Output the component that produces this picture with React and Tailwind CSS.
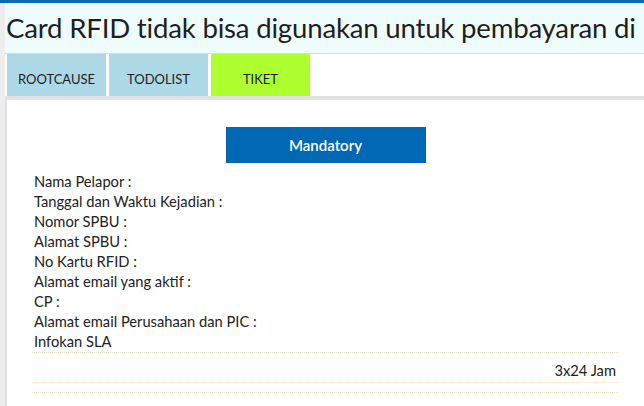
const fields = [
  "Nama Pelapor :",
  "Tanggal dan Waktu Kejadian :",
  "Nomor SPBU :",
  "Alamat SPBU :",
  "No Kartu RFID :",
  "Alamat email yang aktif :",
  "CP :",
  "Alamat email Perusahaan dan PIC :",
  "Infokan SLA",
];

const tabs = [
  { label: "ROOTCAUSE", cls: "bg-[#add8e6]" },
  { label: "TODOLIST", cls: "bg-[#add8e6]" },
  { label: "TIKET", cls: "bg-[#adff2f]" },
];

export default function App() {
  return (
    <div
      className="w-[644px] h-[406px] overflow-hidden bg-white text-[#222]"
      style={{ fontFamily: "Lato, 'Open Sans', sans-serif" }}
    >
      <div className="h-[3px] bg-[#0b6ab4]" />
      <div className="flex h-[403px]">
        <div className="w-[5px] shrink-0 bg-[#ededed]" />
        <div className="flex-1 min-w-0 flex flex-col">
          {/* --- title */}
          <div className="h-[51px] bg-[#effcfd] border-b border-[#d5dde0] pl-[1px] flex items-center whitespace-nowrap overflow-hidden">
            <h1 className="text-[27.6px] leading-none tracking-[-0.2px] text-[#1e1e1e]">
              Card RFID tidak bisa digunakan untuk pembayaran di
            </h1>
          </div>

          {/* --- tabs */}
          <div className="flex gap-[3px] pl-[2px] h-[42px]">
            {tabs.map((t) => (
              <div
                key={t.label}
                className={`${t.cls} w-[99px] pt-[16px] text-center text-[13px] text-[#1e1e1e]`}
              >
                {t.label}
              </div>
            ))}
          </div>

          {/* --- card */}
          <div className="flex-1 border-t-4 border-l-2 border-[#e1e1e5] pl-[25px] pr-[25px] pt-[27px]">
            <div className="flex justify-center">
              <div className="w-[200px] h-[36px] bg-[#0068b5] text-white text-[15px] font-semibold flex items-center justify-center">
                Mandatory
              </div>
            </div>
            <div className="mt-[8px] px-[2px] text-[14.7px] leading-[20px]">
              {fields.map((f) => (
                <p key={f}>{f}</p>
              ))}
            </div>
            <div className="mt-[1px] border-t border-dotted border-[#efe3c2] h-[30px] flex items-center justify-end pt-[5px] pr-[3px] text-[14.7px]">
              3x24 Jam
            </div>
            <div className="border-t border-dotted border-[#efe3c2] h-[10px]" />
            <div className="border-t border-dotted border-[#efe3c2]" />
          </div>
        </div>
      </div>
    </div>
  );
}
